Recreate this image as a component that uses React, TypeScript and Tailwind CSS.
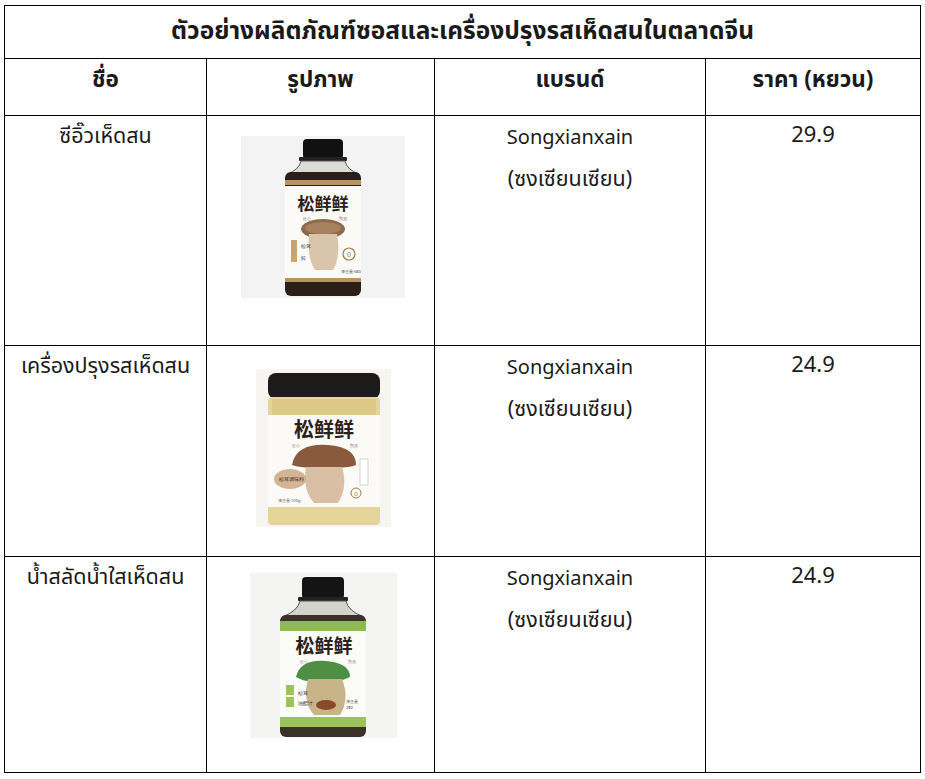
import type { ReactNode } from 'react'

// Product table: Pine mushroom sauces & seasonings in the Chinese market

const FONT = { fontFamily: '"Noto Sans", "Noto Sans Thai", "Leelawadee UI", Tahoma, sans-serif' }

function Brand() {
  return (
    <div className="flex flex-col items-center leading-[42px] text-[#1a1a1a]">
      <span className="-mt-[2px] text-[20px]">Songxianxain</span>
      <span className="-mt-[1px] text-[21.5px]">(ซงเซียนเซียน)</span>
    </div>
  )
}

function Label({ x, y, size }: { x: number; y: number; size: number }) {
  return (
    <text
      x={x}
      y={y}
      textAnchor="middle"
      fontSize={size}
      fontWeight={700}
      fill="#2a211b"
      fontFamily='"Noto Sans CJK SC", sans-serif'
    >
      松鲜鲜
    </text>
  )
}

function SoySauceBottle() {
  return (
    <svg width="164" height="162" viewBox="0 0 164 162">
      <rect width="164" height="162" fill="#f3f3f3" />
      {/* cap */}
      <rect x="62" y="3" width="40" height="20" rx="4" fill="#111" />
      <rect x="58" y="21" width="48" height="4" rx="1" fill="#222" />
      {/* glass neck */}
      <path d="M60 25 L104 25 Q106 34 118 38 L46 38 Q58 34 60 25 Z" fill="#dcdcd8" stroke="#555" strokeWidth="1" />
      {/* body */}
      <rect x="44" y="36" width="76" height="124" rx="6" fill="#2b2019" />
      <rect x="44" y="44" width="76" height="5" fill="#b89560" />
      <rect x="44" y="50" width="76" height="92" fill="#fbfaf6" />
      <Label x={82} y={74} size={17} />
      <text x="62" y="84" fontSize="4" fill="#777">匠心</text>
      <text x="98" y="84" fontSize="4" fill="#777">甄选</text>
      {/* mushroom */}
      <ellipse cx="82" cy="93" rx="22" ry="10" fill="#8e6a4c" />
      <path d="M68 98 Q66 122 74 134 L92 134 Q100 120 96 98 Z" fill="#d9c6aa" />
      <ellipse cx="82" cy="92" rx="18" ry="6" fill="#a8815e" />
      <rect x="50" y="104" width="6" height="22" fill="#c9a66b" />
      <text x="60" y="112" fontSize="5" fill="#333">松茸</text>
      <text x="60" y="124" fontSize="5" fill="#333">鲜</text>
      <circle cx="108" cy="118" r="6" fill="none" stroke="#9a7b4a" strokeWidth="1.2" />
      <text x="108" y="121" fontSize="7" textAnchor="middle" fill="#9a7b4a">0</text>
      <text x="100" y="137" fontSize="4" fill="#444">净含量:580</text>
      <rect x="44" y="142" width="76" height="4" fill="#b89560" />
    </svg>
  )
}

function SeasoningJar() {
  return (
    <svg width="135" height="158" viewBox="0 0 135 158">
      <rect width="135" height="158" fill="#f6f5f2" />
      {/* lid */}
      <rect x="12" y="4" width="112" height="26" rx="8" fill="#1d1b1a" />
      {/* jar body with granules */}
      <rect x="12" y="28" width="112" height="128" rx="4" fill="#e6d59a" />
      <rect x="16" y="30" width="104" height="18" fill="#d8c07a" opacity="0.6" />
      <rect x="12" y="46" width="112" height="92" fill="#fbfaf7" />
      <Label x={68} y={68} size={20} />
      <text x="36" y="78" fontSize="4" fill="#888">匠心</text>
      <text x="94" y="78" fontSize="4" fill="#888">甄选</text>
      {/* mushroom */}
      <path d="M36 96 Q40 74 72 76 Q100 78 100 96 Q90 100 68 98 Q48 100 36 96 Z" fill="#8a5a3e" />
      <path d="M50 98 Q46 120 58 134 L82 134 Q92 118 86 98 Z" fill="#d9bfa3" />
      <ellipse cx="34" cy="110" rx="16" ry="10" fill="#c9a27a" opacity="0.8" />
      <text x="23" y="112" fontSize="5" fill="#3a2a1a">松茸调味料</text>
      <rect x="104" y="90" width="8" height="26" fill="#fff" stroke="#aaa" strokeWidth="0.5" />
      <circle cx="100" cy="124" r="5" fill="none" stroke="#a07a48" strokeWidth="1" />
      <text x="100" y="127" fontSize="6" textAnchor="middle" fill="#a07a48">0</text>
      <text x="22" y="133" fontSize="4" fill="#555">净含量:100g</text>
    </svg>
  )
}

function DressingBottle() {
  return (
    <svg width="147" height="165" viewBox="0 0 147 165">
      <rect width="147" height="165" fill="#f4f4f2" />
      {/* cap */}
      <rect x="52" y="4" width="42" height="22" rx="4" fill="#141414" />
      <rect x="48" y="24" width="50" height="4" rx="1" fill="#222" />
      {/* glass neck/shoulder */}
      <path d="M50 28 L96 28 Q98 38 114 44 L32 44 Q48 38 50 28 Z" fill="#d3d3cb" stroke="#555" strokeWidth="1" />
      {/* body */}
      <rect x="30" y="42" width="86" height="122" rx="6" fill="#3a3128" />
      <rect x="30" y="48" width="86" height="10" fill="#8fba52" />
      <rect x="30" y="58" width="86" height="86" fill="#fbfbf7" />
      <Label x={74} y={80} size={19} />
      <text x="50" y="90" fontSize="4" fill="#888">匠心</text>
      <text x="98" y="90" fontSize="4" fill="#888">甄选</text>
      {/* mushroom with forest */}
      <path d="M46 104 Q50 86 76 88 Q100 90 100 104 Q88 110 72 108 Q56 110 46 104 Z" fill="#4f8f45" />
      <path d="M58 106 Q52 128 64 142 L90 142 Q100 126 92 106 Z" fill="#c9b48a" />
      <ellipse cx="76" cy="132" rx="10" ry="5" fill="#8a4a2a" />
      <rect x="36" y="112" width="8" height="10" fill="#9cc25a" />
      <rect x="36" y="124" width="8" height="10" fill="#9cc25a" />
      <text x="48" y="122" fontSize="5" fill="#333">松茸</text>
      <text x="48" y="132" fontSize="5" fill="#333">油醋汁</text>
      <text x="96" y="130" fontSize="4" fill="#444">净含量</text>
      <text x="96" y="136" fontSize="4" fill="#444">280</text>
      <rect x="30" y="144" width="86" height="10" fill="#9cc25a" />
    </svg>
  )
}

function Cell({ children, className = '' }: { children: ReactNode; className?: string }) {
  return <td className={`border border-black align-top text-center ${className}`}>{children}</td>
}

export default function App() {
  const rows = [
    { name: 'ซีอิ๊วเห็ดสน', img: <SoySauceBottle />, imgPad: 'pt-[20px]', price: '29.9', h: 'h-[230px]' },
    { name: 'เครื่องปรุงรสเห็ดสน', img: <SeasoningJar />, imgPad: 'pt-[23px]', price: '24.9', h: 'h-[211px]' },
    { name: 'น้ำสลัดน้ำใสเห็ดสน', img: <DressingBottle />, imgPad: 'pt-[16px]', price: '24.9', h: 'h-[216px]' },
  ]

  return (
    <div className="min-h-screen bg-white pl-[4px] pt-[5px]" style={FONT}>
      <table className="w-[916px] table-fixed border-collapse border-[1.5px] border-black text-[#1a1a1a]">
        <colgroup>
          <col className="w-[202px]" />
          <col className="w-[228px]" />
          <col className="w-[271px]" />
          <col className="w-[215px]" />
        </colgroup>
        <tbody>
          <tr className="h-[53px]">
            <td colSpan={4} className="border border-black pb-[4px] text-center align-middle text-[24.5px] font-bold">
              ตัวอย่างผลิตภัณฑ์ซอสและเครื่องปรุงรสเห็ดสนในตลาดจีน
            </td>
          </tr>
          <tr className="h-[57px] text-[22.5px] font-bold">
            <Cell className="pt-[3px]">ชื่อ</Cell>
            <Cell className="pt-[3px]">รูปภาพ</Cell>
            <Cell className="pt-[3px]">แบรนด์</Cell>
            <Cell className="pt-[3px]">ราคา (หยวน)</Cell>
          </tr>
          {rows.map((r) => (
            <tr key={r.name} className={`${r.h} text-[21.5px]`}>
              <Cell className="pt-[3px]">{r.name}</Cell>
              <Cell className={r.imgPad}>
                <div className="flex justify-center pl-[5px]">{r.img}</div>
              </Cell>
              <Cell className="pt-[2px]">
                <Brand />
              </Cell>
              <Cell className="pt-[1px] text-[22px]">{r.price}</Cell>
            </tr>
          ))}
        </tbody>
      </table>
    </div>
  )
}
